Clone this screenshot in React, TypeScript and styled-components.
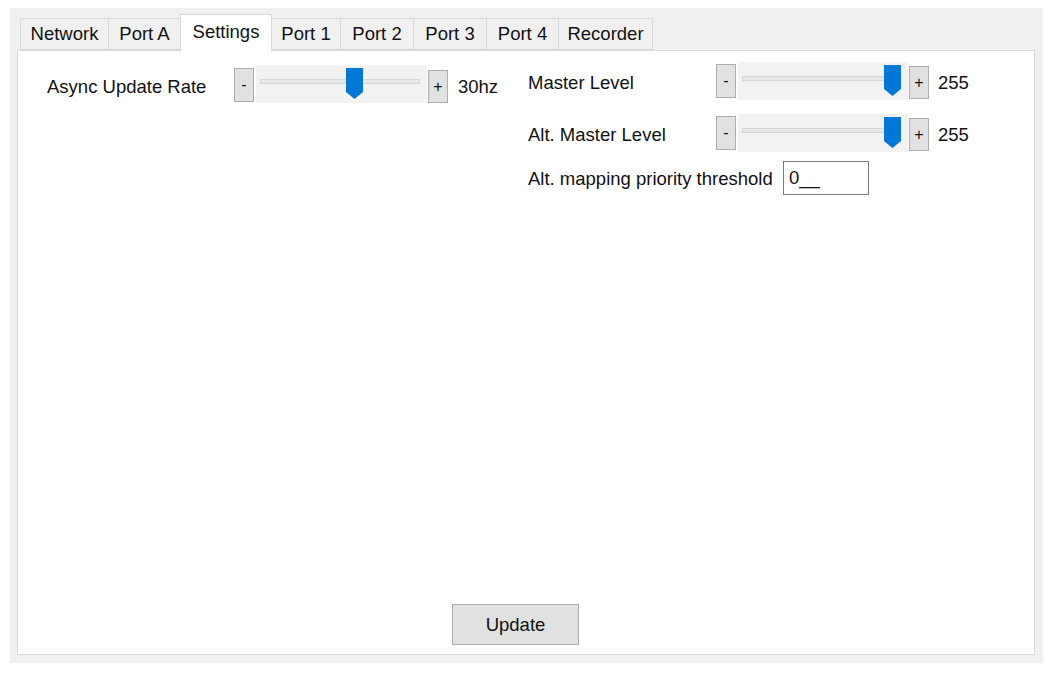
import React from "react";
import styled, { createGlobalStyle } from "styled-components";

const GlobalStyle = createGlobalStyle`
  html, body {
    margin: 0;
    padding: 0;
    background: #ffffff;
  }
  body {
    font-family: "Liberation Sans", Arial, sans-serif;
    color: #111111;
  }
  * { box-sizing: border-box; }
`;

const Frame = styled.div`
  margin: 8px 0 0 10px;
  width: 1033px;
  height: 655px;
  background: #f0f0f0;
  padding: 6px 8px 8px 7px;
  display: flex;
  flex-direction: column;
`;

const TabStrip = styled.div`
  display: flex;
  align-items: flex-end;
  height: 36px;
  padding-left: 3px;
  position: relative;
  z-index: 1;
`;

const Tab = styled.div<{ $w: number; $active?: boolean }>`
  width: ${(p) => p.$w}px;
  height: ${(p) => (p.$active ? 37 : 32)}px;
  margin-right: -1px;
  margin-bottom: ${(p) => (p.$active ? -1 : 0)}px;
  background: ${(p) => (p.$active ? "#ffffff" : "#f0f0f0")};
  border: 1px solid #d9d9d9;
  border-bottom: ${(p) => (p.$active ? "none" : "1px solid #d9d9d9")};
  display: flex;
  align-items: center;
  justify-content: center;
  font-size: 18.5px;
  padding-bottom: ${(p) => (p.$active ? 3 : 0)}px;
  position: relative;
  z-index: ${(p) => (p.$active ? 2 : 1)};
`;

const Panel = styled.div`
  flex: 1;
  background: #ffffff;
  border: 1px solid #d9d9d9;
  display: flex;
  flex-direction: column;
`;

const Content = styled.div`
  flex: 1;
  display: flex;
  align-items: flex-start;
`;

const Column = styled.div<{ $w?: number; $pt: number; $pl: number }>`
  ${(p) => (p.$w ? `width: ${p.$w}px;` : "flex: 1;")}
  padding-top: ${(p) => p.$pt}px;
  padding-left: ${(p) => p.$pl}px;
  display: flex;
  flex-direction: column;
`;

const Row = styled.div<{ $mt?: number }>`
  display: flex;
  align-items: center;
  margin-top: ${(p) => p.$mt ?? 0}px;
`;

const Label = styled.div<{ $w: number; $pt: number }>`
  width: ${(p) => p.$w}px;
  font-size: 18.5px;
  padding-top: ${(p) => p.$pt}px;
  white-space: nowrap;
`;

const Value = styled.div<{ $ml: number; $pt: number }>`
  margin-left: ${(p) => p.$ml}px;
  font-size: 18.5px;
  padding-top: ${(p) => p.$pt}px;
`;

const TrackBarBox = styled.div<{ $w: number }>`
  width: ${(p) => p.$w}px;
  height: 38px;
  display: flex;
  align-items: flex-start;
`;

const StepButton = styled.div<{ $mt: number; $h: number }>`
  width: 20px;
  height: ${(p) => p.$h}px;
  margin-top: ${(p) => p.$mt}px;
  background: #e1e1e1;
  border: 1px solid #adadad;
  display: flex;
  align-items: center;
  justify-content: center;
  font-size: 16px;
  line-height: 1;
  color: #111;
  flex-shrink: 0;
`;

const TrackArea = styled.div`
  flex: 1;
  height: 38px;
  margin: 0 1px 0 2px;
  background: #f2f2f2;
  position: relative;
`;

const TrackLine = styled.div`
  position: absolute;
  top: 14px;
  left: 4px;
  right: 7px;
  height: 5px;
  background: #e7e7e7;
  border: 1px solid #d6d6d6;
`;

const ThumbSvg = styled.svg`
  position: absolute;
  top: 3px;
  width: 17px;
  height: 31px;
`;

const TextBox = styled.div`
  width: 86px;
  height: 34px;
  border: 1px solid #7a7a7a;
  background: #ffffff;
  font-size: 18.5px;
  padding: 5px 0 0 5px;
`;

const Footer = styled.div`
  display: flex;
  padding: 0 0 9px 434px;
`;

const PushButton = styled.div`
  width: 127px;
  height: 41px;
  background: #e1e1e1;
  border: 1px solid #adadad;
  display: flex;
  align-items: center;
  justify-content: center;
  font-size: 18.5px;
`;

type TrackProps = {
  width: number;
  value: number;
  min: number;
  max: number;
  minusTop: number;
  plusTop: number;
};

const TrackBar: React.FC<TrackProps> = ({ width, value, min, max, minusTop, plusTop }) => {
  const areaW = width - 40 - 3;
  const span = areaW - 17 - 7 - 4;
  const left = 4 + ((value - min) / (max - min)) * span;
  return (
    <TrackBarBox $w={width}>
      <StepButton $mt={minusTop} $h={34}>-</StepButton>
      <TrackArea>
        <TrackLine />
        <ThumbSvg viewBox="0 0 17 31" style={{ left }}>
          <path d="M0 0 H17 V24 L8.5 31 L0 24 Z" fill="#0078d7" />
        </ThumbSvg>
      </TrackArea>
      <StepButton $mt={plusTop} $h={33}>+</StepButton>
    </TrackBarBox>
  );
};

const tabs = [
  { name: "Network", w: 89 },
  { name: "Port A", w: 73 },
  { name: "Settings", w: 92, active: true },
  { name: "Port 1", w: 70 },
  { name: "Port 2", w: 74 },
  { name: "Port 3", w: 74 },
  { name: "Port 4", w: 73 },
  { name: "Recorder", w: 95 },
];

export default function App() {
  return (
    <>
      <GlobalStyle />
      <Frame>
        <TabStrip>
          {tabs.map((t) => (
            <Tab key={t.name} $w={t.w} $active={t.active}>
              {t.name}
            </Tab>
          ))}
        </TabStrip>
        <Panel>
          <Content>
            <Column $w={510} $pt={14} $pl={29}>
              <Row>
                <Label $w={187} $pt={5}>Async Update Rate</Label>
                <TrackBar width={214} value={30} min={0} max={50} minusTop={3} plusTop={5} />
                <Value $ml={10} $pt={5}>30hz</Value>
              </Row>
            </Column>
            <Column $pt={11} $pl={0}>
              <Row>
                <Label $w={188} $pt={4}>Master Level</Label>
                <TrackBar width={213} value={255} min={0} max={255} minusTop={2} plusTop={4} />
                <Value $ml={9} $pt={4}>255</Value>
              </Row>
              <Row $mt={14}>
                <Label $w={188} $pt={4}>Alt. Master Level</Label>
                <TrackBar width={213} value={255} min={0} max={255} minusTop={2} plusTop={4} />
                <Value $ml={9} $pt={4}>255</Value>
              </Row>
              <Row $mt={9}>
                <Label $w={255} $pt={2}>Alt. mapping priority threshold</Label>
                <TextBox>0__</TextBox>
              </Row>
            </Column>
          </Content>
          <Footer>
            <PushButton>Update</PushButton>
          </Footer>
        </Panel>
      </Frame>
    </>
  );
}
